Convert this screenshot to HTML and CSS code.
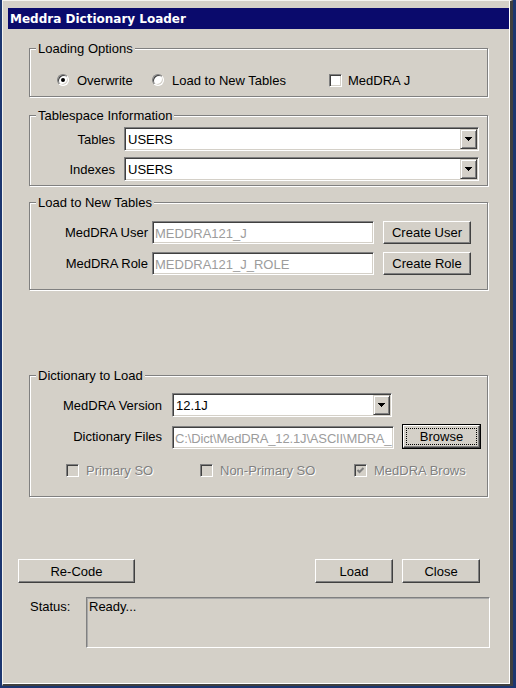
FILE: index.html
```html
<!DOCTYPE html>
<html>
<head>
<meta charset="utf-8">
<title>Meddra Dictionary Loader</title>
<link rel="stylesheet" href="styles.css">
</head>
<body>
<div class="window">
  <div class="titlebar">Meddra Dictionary Loader</div>
  <div class="client">

    <section class="group g-options">
      <div class="group-title">Loading Options</div>
      <div class="options-row">
        <span class="opt opt-overwrite"><span class="radio checked"></span><span class="opt-text">Overwrite</span></span>
        <span class="opt opt-new"><span class="radio"></span><span class="opt-text">Load to New Tables</span></span>
        <span class="opt opt-j"><span class="check"></span><span class="opt-text tight">MedDRA J</span></span>
      </div>
    </section>

    <section class="group g-tables">
      <div class="group-title">Tablespace Information</div>
      <div class="ts-grid">
        <span class="lbl">Tables</span>
        <div class="combo"><span class="combo-value">USERS</span><span class="drop"><svg width="7" height="4" viewBox="0 0 7 4"><path d="M0 0h7v1h-1v1h-1v1h-1v1h-1v-1h-1v-1h-1v-1h-1z" fill="#000"/></svg></span></div>
        <span class="lbl">Indexes</span>
        <div class="combo"><span class="combo-value">USERS</span><span class="drop"><svg width="7" height="4" viewBox="0 0 7 4"><path d="M0 0h7v1h-1v1h-1v1h-1v1h-1v-1h-1v-1h-1v-1h-1z" fill="#000"/></svg></span></div>
      </div>
    </section>

    <section class="group g-new">
      <div class="group-title">Load to New Tables</div>
      <div class="new-grid">
        <span class="lbl">MedDRA User</span>
        <div class="field disabled">MEDDRA121_J</div>
        <button class="btn new-btn">Create User</button>
        <span class="lbl">MedDRA Role</span>
        <div class="field disabled">MEDDRA121_J_ROLE</div>
        <button class="btn new-btn">Create Role</button>
      </div>
    </section>

    <section class="group g-dict">
      <div class="group-title">Dictionary to Load</div>
      <div class="dict-row dict-row1">
        <span class="lbl dict-lbl">MedDRA Version</span>
        <div class="combo dict-combo"><span class="combo-value">12.1J</span><span class="drop"><svg width="7" height="4" viewBox="0 0 7 4"><path d="M0 0h7v1h-1v1h-1v1h-1v1h-1v-1h-1v-1h-1v-1h-1z" fill="#000"/></svg></span></div>
      </div>
      <div class="dict-row dict-row2">
        <span class="lbl dict-lbl">Dictionary Files</span>
        <div class="field disabled dict-field">C:\Dict\MedDRA_12.1J\ASCII\MDRA_</div>
        <button class="btn-default"><span class="btn-face"><span class="focus">Browse</span></span></button>
      </div>
      <div class="dict-checks">
        <span class="chk-item w1"><span class="check off"></span><span class="opt-text dis">Primary SO</span></span>
        <span class="chk-item w2"><span class="check off"></span><span class="opt-text dis">Non-Primary SO</span></span>
        <span class="chk-item"><span class="check off"><svg width="9" height="9" viewBox="0 0 9 9"><path d="M1.5 4 L3.5 6 L7.5 2" stroke="#808080" stroke-width="2" fill="none"/></svg></span><span class="opt-text dis">MedDRA Brows</span></span>
      </div>
    </section>

    <div class="actions">
      <button class="btn recode">Re-Code</button>
      <button class="btn act load">Load</button>
      <button class="btn act close">Close</button>
    </div>

    <div class="status-row">
      <span class="status-lbl">Status:</span>
      <div class="status-box">Ready...</div>
    </div>

  </div>
</div>
</body>
</html>
```

FILE: styles.css
```css
* { box-sizing: border-box; }

html, body { margin: 0; padding: 0; }

body {
  width: 516px;
  height: 688px;
  overflow: hidden;
  background: #1c3670;
  font: 13px/15px "Liberation Sans", Arial, sans-serif;
  color: #000;
}

.window {
  margin-left: 2px;
  width: 511px;
  height: 686px;
  background: #d4d0c8;
  border-style: solid;
  border-width: 1px 3px 2px 1px;
  border-color: #f4f3ef #404040 #404040 #f4f3ef;
  box-shadow: inset -1px -1px 0 #ffffff;
  padding: 7px 0 0 5px;
}

.titlebar {
  width: 501px;
  height: 21px;
  background: #0a0a6c;
  color: #fff;
  font: bold 12px/19px "DejaVu Sans", Verdana, sans-serif;
  padding: 2px 0 0 2px;
  white-space: nowrap;
}

.client { width: 502px; }

/* Buttons */
.btn {
  font: inherit;
  color: #000;
  margin: 0;
  padding: 0;
  background: #d4d0c8;
  border: 1px solid;
  border-color: #fff #404040 #404040 #fff;
  box-shadow: inset -1px -1px 0 #808080;
  display: flex;
  align-items: center;
  justify-content: center;
  white-space: nowrap;
}

.btn-default {
  font: inherit;
  color: #000;
  margin: 0 0 0 8px;
  padding: 0;
  width: 79px;
  height: 25px;
  background: #d4d0c8;
  border: 1px solid #000;
  display: flex;
}
.btn-face {
  flex: 1;
  display: flex;
  border: 1px solid;
  border-color: #fff #404040 #404040 #fff;
  box-shadow: inset -1px -1px 0 #808080;
  padding: 2px;
}
.focus {
  flex: 1;
  border: 1px dotted #000;
  display: flex;
  align-items: center;
  justify-content: center;
}

/* Group boxes (etched) */
.group {
  margin-left: 21px;
  width: 459px;
  border: 1px solid #808080;
  box-shadow: inset 1px 1px 0 #fff, 1px 1px 0 #fff;
}

.group-title {
  width: max-content;
  margin: -8px 0 0 6px;
  padding: 0 2px;
  background: #d4d0c8;
}

.g-options { margin-top: 19px; height: 49px; }
.g-tables  { margin-top: 18px; height: 71px; }
.g-new     { margin-top: 16px; height: 88px; }
.g-dict    { margin-top: 85px; height: 122px; }

/* Loading options row */
.options-row {
  display: flex;
  align-items: center;
  height: 16px;
  margin-top: 16px;
  padding-left: 27px;
}

.opt { display: flex; align-items: center; flex: none; }
.opt-overwrite { width: 95px; }
.opt-new { width: 177px; }

.opt-text { margin-left: 8px; white-space: nowrap; }
.opt-text.tight { margin-left: 6px; }
.opt-text.dis { color: #808080; text-shadow: 1px 1px 0 #fff; }

.radio {
  flex: none;
  width: 12px;
  height: 12px;
  border-radius: 50%;
  border: 1px solid;
  border-color: #808080 #fff #fff #808080;
  box-shadow: inset 1px 1px 0 #404040, inset -1px -1px 0 #d4d0c8;
  background: #fff;
  display: flex;
  align-items: center;
  justify-content: center;
}
.radio.checked::after {
  content: "";
  width: 4px;
  height: 4px;
  border-radius: 50%;
  background: #000;
}

.check {
  flex: none;
  width: 13px;
  height: 13px;
  border: 1px solid;
  border-color: #808080 #fff #fff #808080;
  box-shadow: inset 1px 1px 0 #404040, inset -1px -1px 0 #d4d0c8;
  background: #fff;
  display: flex;
  align-items: center;
  justify-content: center;
}
.check.off { background: #d4d0c8; }
.check svg { display: block; }

/* Sunken fields & combos */
.combo, .field {
  border: 1px solid;
  border-color: #808080 #fff #fff #808080;
  box-shadow: inset 1px 1px 0 #404040, inset -1px -1px 0 #d4d0c8;
  background: #fff;
}

.combo {
  display: flex;
  height: 24px;
  padding: 1px;
}
.combo-value {
  flex: 1;
  padding-left: 2px;
  display: flex;
  align-items: center;
  white-space: nowrap;
}
.drop {
  flex: none;
  width: 17px;
  height: 20px;
  background: #d4d0c8;
  border: 1px solid;
  border-color: #d4d0c8 #404040 #404040 #d4d0c8;
  box-shadow: inset 1px 1px 0 #fff, inset -1px -1px 0 #808080;
  display: flex;
  align-items: center;
  justify-content: center;
}
.drop svg { display: block; }

.field {
  height: 23px;
  padding: 1px 1px 0 2px;
  display: flex;
  align-items: center;
  white-space: nowrap;
  overflow: hidden;
}
.field.disabled { color: #9c9c9c; }

.lbl {
  align-self: center;
  text-align: right;
  white-space: nowrap;
}

/* Tablespace grid */
.ts-grid {
  display: grid;
  grid-template-columns: 86px 355px;
  grid-auto-rows: 24px;
  column-gap: 8px;
  row-gap: 6px;
  margin-top: 4px;
}
.ts-grid .lbl { padding-right: 1px; }

/* Load to new tables grid */
.new-grid {
  display: grid;
  grid-template-columns: 118px 222px 93px;
  grid-auto-rows: 23px;
  column-gap: 4px;
  row-gap: 8px;
  margin-top: 11px;
}
.new-grid .new-btn { margin-left: 5px; width: 88px; }

/* Dictionary group */
.dict-row { display: flex; }
.dict-row1 { height: 24px; align-items: center; margin-top: 10px; }
.dict-row2 { height: 25px; align-items: flex-end; margin-top: 7px; }
.dict-lbl { width: 132px; }
.dict-combo { margin-left: 10px; width: 220px; }
.dict-field { margin-left: 10px; width: 222px; letter-spacing: -0.15px; }

.dict-checks {
  display: flex;
  align-items: center;
  height: 15px;
  margin-top: 14px;
  padding-left: 36px;
}
.chk-item { display: flex; align-items: center; flex: none; }
.chk-item.w1 { width: 134px; }
.chk-item.w2 { width: 154px; }
.chk-item .opt-text { margin-left: 7px; }

/* Bottom actions */
.actions {
  display: flex;
  height: 24px;
  margin-top: 62px;
  padding-right: 30px;
}
.actions .recode { margin-left: 10px; width: 117px; }
.actions .act { width: 78px; }
.actions .load { margin-left: auto; }
.actions .close { margin-left: 9px; }

.status-row {
  display: flex;
  margin-top: 14px;
}
.status-lbl {
  width: 56px;
  margin-left: 22px;
  padding-top: 2px;
}
.status-box {
  width: 404px;
  height: 51px;
  border: 1px solid;
  border-color: #808080 #fff #fff #808080;
  box-shadow: inset 1px 1px 0 #a8a8a8;
  background: #d4d0c8;
  padding: 1px 0 0 2px;
}
```
